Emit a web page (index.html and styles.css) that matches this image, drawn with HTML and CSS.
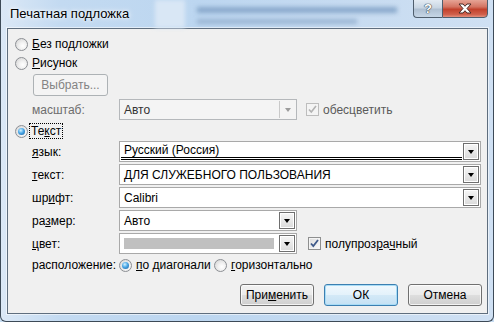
FILE: index.html
```html
<!DOCTYPE html>
<html lang="ru">
<head>
    <meta charset="UTF-8">
    <title>Печатная подложка</title>
    <link rel="stylesheet" href="styles.css">
</head>
<body>
    <div class="window">
        <div class="titlebar">
            <div class="glass g1"></div>
            <div class="glass g2"></div>
            <div class="glass g3"></div>
            <span class="title">Печатная подложка</span>
            <div class="caption">
                <span class="cap-help">?</span>
                <span class="cap-close">
                    <svg width="14" height="11" viewBox="0 0 14 11"><path d="M1 1h4l2 2.3L9 1h4L9 5.5 13 10H9L7 7.7 5 10H1l4-4.5z" fill="#fff" stroke="#4a2a26" stroke-width="1" stroke-linejoin="round"/></svg>
                </span>
            </div>
        </div>
        <div class="client">
            <div class="row r1">
                <span class="radio"></span>
                <span class="opt"><u>Б</u>ез подложки</span>
            </div>
            <div class="row r2">
                <span class="radio"></span>
                <span class="opt"><u>Р</u>исунок</span>
            </div>
            <div class="row r3">
                <span class="btn disabled pick">Выбрать...</span>
            </div>
            <div class="row r4">
                <span class="label dim">масштаб:</span>
                <div class="combo short off">
                    <span class="value">Авто</span>
                    <span class="drop"><i class="tri"></i></span>
                </div>
                <span class="check off"><svg width="11" height="11" viewBox="0 0 11 11"><path d="M2 5.5l2.3 2.6L9 2" fill="none" stroke="#b3b3b3" stroke-width="1.6"/></svg></span>
                <span class="opt dim2">обесцветить</span>
            </div>
            <div class="row r5">
                <span class="radio on"></span>
                <span class="opt focus">Те<u>к</u>ст</span>
            </div>
            <div class="row field">
                <span class="label"><u>я</u>зык:</span>
                <div class="combo wide">
                    <span class="value lang">Русский (Россия)</span>
                    <span class="drop"><i class="tri"></i></span>
                </div>
            </div>
            <div class="row field">
                <span class="label"><u>т</u>екст:</span>
                <div class="combo wide">
                    <span class="value">ДЛЯ СЛУЖЕБНОГО ПОЛЬЗОВАНИЯ</span>
                    <span class="drop"><i class="tri"></i></span>
                </div>
            </div>
            <div class="row field">
                <span class="label">шр<u>и</u>фт:</span>
                <div class="combo wide">
                    <span class="value">Calibri</span>
                    <span class="drop"><i class="tri"></i></span>
                </div>
            </div>
            <div class="row field">
                <span class="label">ра<u>з</u>мер:</span>
                <div class="combo short">
                    <span class="value">Авто</span>
                    <span class="drop"><i class="tri"></i></span>
                </div>
            </div>
            <div class="row field">
                <span class="label"><u>ц</u>вет:</span>
                <div class="combo short">
                    <span class="value"><i class="swatch"></i></span>
                    <span class="drop"><i class="tri"></i></span>
                </div>
                <span class="check"><svg width="11" height="11" viewBox="0 0 11 11"><path d="M2 5.5l2.3 2.6L9 2" fill="none" stroke="#3f5a8a" stroke-width="1.8"/></svg></span>
                <span class="opt">полупроз<u>р</u>а<u>ч</u>ный</span>
            </div>
            <div class="row r11">
                <span class="label">расположение:</span>
                <span class="radio on"></span>
                <span class="opt diag"><u>п</u>о диагонали</span>
                <span class="radio"></span>
                <span class="opt"><u>г</u>оризонтально</span>
            </div>
            <div class="row buttons">
                <span class="btn">При<u>м</u>енить</span>
                <span class="btn default">ОК</span>
                <span class="btn">Отмена</span>
            </div>
        </div>
    </div>
</body>
</html>
```

FILE: styles.css
```css
body {
    margin: 0;
    font-family: "Liberation Sans", Arial, sans-serif;
    font-size: 12px;
    color: #000;
    background: #c9def3;
}
.window {
    position: relative;
    width: 494px;
    height: 322px;
    box-sizing: border-box;
    padding: 0 5px 7px 6px;
    display: flex;
    flex-direction: column;
    background: linear-gradient(90deg, #dbe8f6 0%, #c3daf1 12%, #bcd6f0 40%, #c8dcf1 75%, #cfe0f3 100%);
    border-left: 1px solid #3d4a57;
    border-right: 1px solid #3d4a57;
    border-bottom: 1px solid #3d4a57;
    border-radius: 0 0 6px 6px;
    overflow: hidden;
}
.titlebar {
    position: relative;
    height: 28px;
    flex: none;
}
.glass {
    position: absolute;
    filter: blur(2px);
}
.g1 {
    left: 148px;
    top: 0;
    width: 30px;
    height: 28px;
    background: #d9e7f5;
}
.g2 {
    left: 190px;
    top: 7px;
    width: 200px;
    height: 6px;
    background: #8aa9cc;
}
.g3 {
    left: 190px;
    top: 19px;
    width: 160px;
    height: 5px;
    background: #9bb6d4;
}
.title {
    position: relative;
    display: block;
    padding: 6px 0 0 3px;
    font-size: 13px;
    line-height: 16px;
    text-shadow: 0 0 6px #fff, 0 0 3px #fff;
}
.caption {
    position: absolute;
    right: 0;
    top: -1px;
    display: flex;
}
.cap-help,
.cap-close {
    height: 19px;
    box-sizing: border-box;
    border: 1px solid #4f5e6d;
    display: flex;
    align-items: center;
    justify-content: center;
}
.cap-help {
    width: 29px;
    border-right: none;
    border-radius: 0 0 0 4px;
    background: linear-gradient(#e3ebf3 0%, #c9d6e3 45%, #afc0d2 55%, #c6d6e6 100%);
    color: #fff;
    font-weight: bold;
    font-size: 13px;
    text-shadow: 0 0 1px #33404c, 0 0 1px #33404c, 0 0 1px #33404c;
}
.cap-close {
    width: 46px;
    border-radius: 0 0 4px 0;
    background: linear-gradient(#e6a495 0%, #d47462 40%, #c2412c 55%, #d0604c 85%, #e5907e 100%);
}
.client {
    flex: 1;
    box-sizing: border-box;
    border: 1px solid #5f6e7e;
    background: #f0f0f0;
    box-shadow: 0 0 0 1px rgba(255, 255, 255, 0.55);
    padding: 8px 5px 0 7px;
}
.row {
    display: flex;
    align-items: center;
    white-space: nowrap;
}
.r1 { height: 14px; }
.r2 { height: 14px; margin-top: 5px; }
.r3 { height: 22px; margin-top: 4px; }
.r4 { height: 21px; margin-top: 3px; }
.r5 { height: 16px; margin-top: 3px; }
.field { height: 21px; margin-top: 2px; }
.r11 { height: 14px; margin-top: 4px; }
.buttons {
    height: 22px;
    margin-top: 12px;
    justify-content: flex-end;
    gap: 10px;
}
.radio {
    flex: none;
    width: 13px;
    height: 13px;
    box-sizing: border-box;
    border-radius: 50%;
    border: 1px solid #8c8f94;
    background: radial-gradient(circle at 62% 62%, #ffffff 0%, #f2f2f2 35%, #cfcfcf 100%);
    display: flex;
    align-items: center;
    justify-content: center;
}
.radio.on::after {
    content: "";
    width: 7px;
    height: 7px;
    border-radius: 50%;
    background: radial-gradient(circle at 40% 35%, #d4f2ff 0%, #4aa7e6 45%, #1a5a98 100%);
}
.opt {
    margin-left: 4px;
    line-height: 14px;
}
.focus {
    margin-left: 2px;
    padding: 0 1px;
    line-height: 14px;
    outline: 1px dotted #000;
}
.label {
    flex: none;
    width: 87px;
    margin-left: 17px;
}
.diag {
    width: 78px;
}
.dim { color: #6d6d6d; }
.dim2 { color: #5a5a5a; }
.btn {
    flex: none;
    width: 74px;
    height: 22px;
    box-sizing: border-box;
    border: 1px solid #707070;
    border-radius: 3px;
    background: linear-gradient(#f2f2f2 0%, #ebebeb 48%, #dddddd 52%, #cfcfcf 100%);
    box-shadow: inset 0 0 0 1px rgba(255, 255, 255, 0.75);
    display: flex;
    align-items: center;
    justify-content: center;
}
.btn.pick {
    width: 75px;
    margin-left: 18px;
}
.btn.disabled {
    border-color: #adb2b5;
    background: #f4f4f4;
    box-shadow: none;
    color: #838383;
}
.btn.default {
    border-color: #3c7fb1;
    background: linear-gradient(#f0f8fd 0%, #e4f2fb 48%, #d3e9f7 52%, #c5e1f4 100%);
    box-shadow: inset 0 0 0 1px #a8dcf6;
}
.combo {
    flex: none;
    height: 21px;
    box-sizing: border-box;
    border: 1px solid #a9a9a9;
    background: #fff;
    display: flex;
    align-items: stretch;
    padding: 1px;
}
.combo.wide { width: 362px; }
.combo.short { width: 178px; }
.value {
    flex: 1;
    padding-left: 3px;
    display: flex;
    align-items: center;
    overflow: hidden;
}
.value.lang {
    box-sizing: border-box;
    border-bottom: 3px double #000;
    margin-right: 1px;
}
.drop {
    width: 16px;
    box-sizing: border-box;
    border: 1px solid #6f6f6f;
    background: linear-gradient(#f6f6f6, #dadada);
    box-shadow: inset 0 0 0 1px #fff;
    display: flex;
    align-items: center;
    justify-content: center;
}
.tri {
    width: 0;
    height: 0;
    border-left: 3.5px solid transparent;
    border-right: 3.5px solid transparent;
    border-top: 4px solid #000;
}
.combo.off {
    border-color: #b5b8bb;
    background: #f4f4f4;
}
.combo.off .value {
    color: #333;
}
.combo.off .drop {
    border: none;
    border-left: 1px solid #c9c9c9;
    background: #f4f4f4;
    box-shadow: none;
}
.combo.off .tri {
    border-top-color: #9c9c9c;
}
.swatch {
    width: 150px;
    height: 11px;
    background: #c0c0c0;
}
.check {
    flex: none;
    width: 13px;
    height: 13px;
    box-sizing: border-box;
    margin-left: 9px;
    border: 1px solid #8e8f8f;
    background: linear-gradient(135deg, #dcdcdc, #fafafa);
    box-shadow: inset 0 0 0 1px #f4f4f4;
    display: flex;
    align-items: center;
    justify-content: center;
}
.field .check {
    margin-left: 11px;
}
.check.off {
    border-color: #bdbdbd;
    background: #f4f4f4;
}
```
